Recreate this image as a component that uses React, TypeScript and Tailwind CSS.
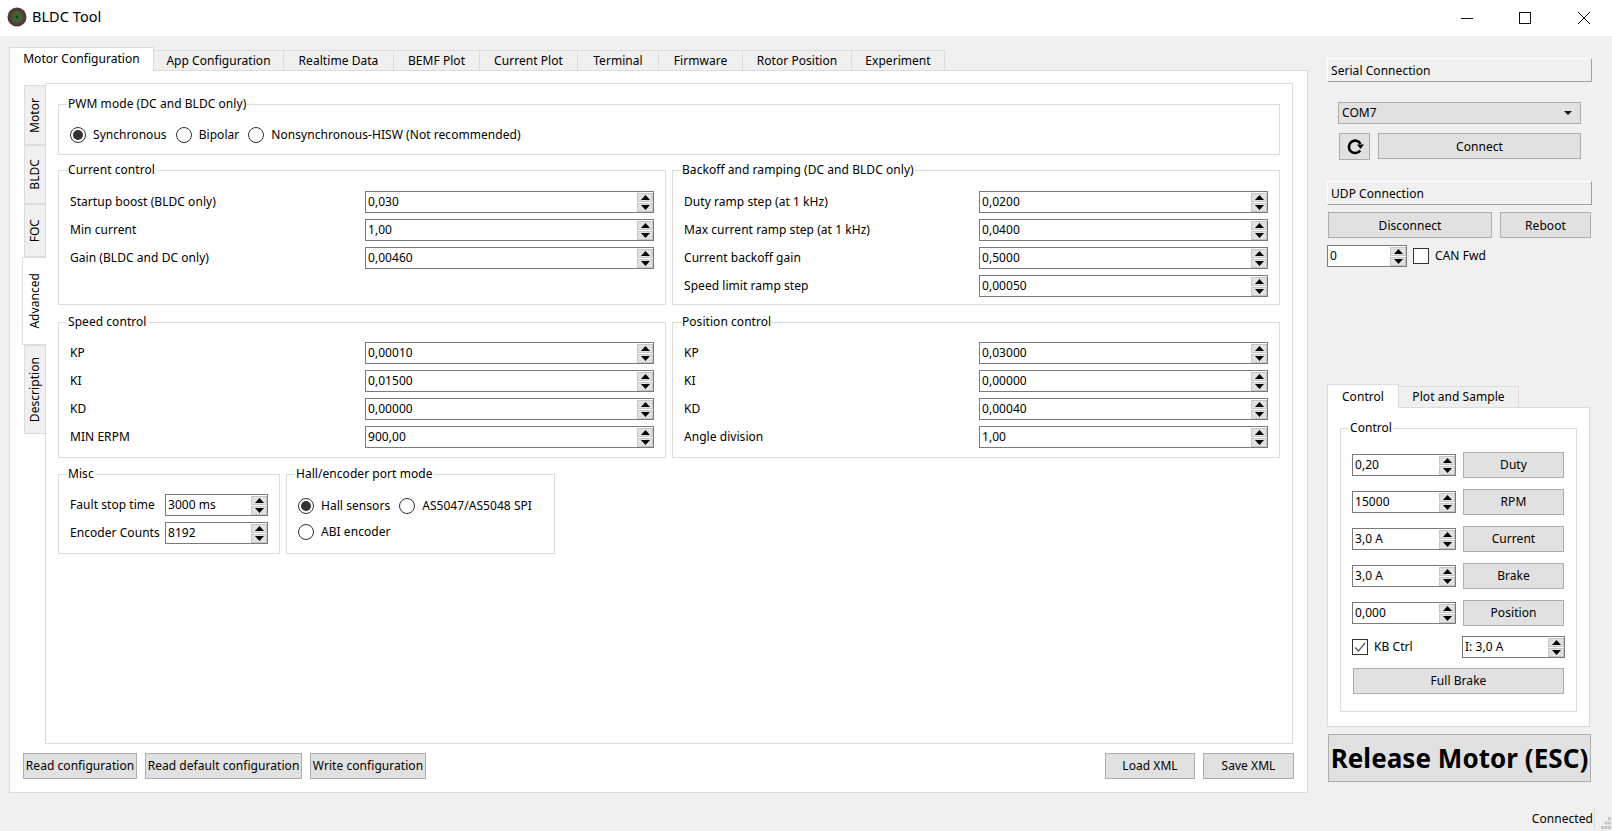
import { ReactNode } from "react";

const font = "font-['Noto_Sans',Tahoma,sans-serif]";

function Arrows() {
  return (
    <div className="flex flex-col w-[16px] h-[19px] shrink-0 gap-px">
      <div className="flex-1 bg-[#e1e1e1] border border-[#c6c6c6] flex items-center justify-center">
        <svg width="9" height="5" viewBox="0 0 9 5">
          <path d="M4.5 0L9 5H0z" fill="#000" />
        </svg>
      </div>
      <div className="flex-1 bg-[#e1e1e1] border border-[#c6c6c6] flex items-center justify-center">
        <svg width="9" height="5" viewBox="0 0 9 5">
          <path d="M0 0h9L4.5 5z" fill="#000" />
        </svg>
      </div>
    </div>
  );
}

function Spin({ value, className = "" }: { value: string; className?: string }) {
  return (
    <div
      className={`h-[22px] bg-white border border-[#7a7a7a] flex items-center pl-[2px] ${className}`}
    >
      <span className="flex-1 leading-none">{value}</span>
      <Arrows />
    </div>
  );
}

function Button({
  children,
  className = "",
}: {
  children: ReactNode;
  className?: string;
}) {
  return (
    <div
      className={`h-[26px] bg-[#e1e1e1] border border-[#adadad] flex items-center justify-center whitespace-nowrap ${className}`}
    >
      {children}
    </div>
  );
}

function Radio({ label, checked = false }: { label: string; checked?: boolean }) {
  return (
    <div className="flex items-center gap-[7px] whitespace-nowrap">
      <div className="w-[16px] h-[16px] rounded-full border border-[#333] flex items-center justify-center bg-white">
        {checked && <div className="w-[10px] h-[10px] rounded-full bg-[#333]" />}
      </div>
      {label}
    </div>
  );
}

function Check({ label, checked = false }: { label: string; checked?: boolean }) {
  return (
    <div className="flex items-center gap-[6px] whitespace-nowrap">
      <div className="w-[16px] h-[16px] border border-[#333] bg-white flex items-center justify-center">
        {checked && (
          <svg width="12" height="12" viewBox="0 0 12 12" fill="none">
            <path d="M1 6.5l3.5 3.5L11 2" stroke="#555" strokeWidth="1.2" />
          </svg>
        )}
      </div>
      {label}
    </div>
  );
}

function Group({
  title,
  className = "",
  children,
}: {
  title: string;
  className?: string;
  children: ReactNode;
}) {
  return (
    <div className={`relative border border-[#dcdcdc] ${className}`}>
      <span className="absolute left-[8px] top-[-10px] bg-white px-px leading-[18px] whitespace-nowrap">
        {title}
      </span>
      {children}
    </div>
  );
}

function ParamGroup({
  title,
  className = "",
  rows,
  topClass = "pt-[19px]",
}: {
  title: string;
  className?: string;
  rows: [string, string][];
  topClass?: string;
}) {
  return (
    <Group title={title} className={className}>
      <div className={`flex flex-col gap-[6px] pl-[11px] pr-[11px] ${topClass}`}>
        {rows.map(([label, value]) => (
          <div key={label} className="flex items-center justify-between">
            <span>{label}</span>
            <Spin value={value} className="w-[289px]" />
          </div>
        ))}
      </div>
    </Group>
  );
}

const mainTabs = [
  ["App Configuration", "w-[130px]"],
  ["Realtime Data", "w-[110px]"],
  ["BEMF Plot", "w-[86px]"],
  ["Current Plot", "w-[98px]"],
  ["Terminal", "w-[81px]"],
  ["Firmware", "w-[84px]"],
  ["Rotor Position", "w-[109px]"],
  ["Experiment", "w-[93px]"],
];

const sideTabs = [
  ["Motor", "h-[60px]"],
  ["BLDC", "h-[59px]"],
  ["FOC", "h-[53px]"],
];

const controls = [
  ["0,20", "Duty"],
  ["15000", "RPM"],
  ["3,0 A", "Current"],
  ["3,0 A", "Brake"],
  ["0,000", "Position"],
];

export default function App() {
  return (
    <div
      className={`${font} w-[1612px] h-[831px] overflow-hidden bg-[#f0f0f0] text-[12px] tracking-[0.05px] text-black flex flex-col`}
    >
      {/* window title */}
      <div className="h-[36px] bg-white flex items-center shrink-0">
        <svg width="20" height="20" viewBox="0 0 20 20" className="ml-[7px] -mt-[2px]">
          <circle cx="10" cy="10" r="9.5" fill="#4d3a34" />
          <circle cx="10" cy="10" r="6.5" fill="#5f4a3a" />
          <circle cx="10" cy="10" r="4.5" fill="#2f6b35" />
          <circle cx="10" cy="10" r="1.5" fill="#1d3d20" />
        </svg>
        <span className="ml-[5px] text-[14.5px] -mt-[2px]">BLDC Tool</span>
        <div className="ml-auto flex items-center mr-[22px] -mt-[1px]">
          <svg width="12" height="12" viewBox="0 0 12 12" className="mr-[46px]">
            <path d="M0 6.5h12" stroke="#111" />
          </svg>
          <svg width="12" height="12" viewBox="0 0 12 12" className="mr-[47px]">
            <rect x="0.5" y="0.5" width="11" height="11" fill="none" stroke="#111" />
          </svg>
          <svg width="12" height="12" viewBox="0 0 12 12">
            <path d="M0 0l12 12M12 0L0 12" stroke="#111" />
          </svg>
        </div>
      </div>

      <div className="flex flex-1 min-h-0">
        {/* left side */}
        <div className="w-[1308px] pl-[9px] pt-[11px] shrink-0">
          <div className="flex items-end h-[23px]">
            <div className="w-[145px] h-[24px] -mb-px pb-[2px] bg-white border border-b-0 border-[#dcdcdc] z-10 flex items-center justify-center">
              Motor Configuration
            </div>
            {mainTabs.map(([label, width]) => (
              <div
                key={label}
                className={`${width} h-[20px] bg-[#f0f0f0] border border-l-0 border-b-0 border-[#dcdcdc] flex items-center justify-center`}
              >
                {label}
              </div>
            ))}
          </div>
          <div className="h-[723px] bg-white border border-[#dcdcdc] pt-[12px] pl-[14px] pr-[14px]">
            <div className="flex h-[661px]">
              <div className="w-[21px] pt-[2px] flex flex-col shrink-0">
                {sideTabs.map(([label, height]) => (
                  <div
                    key={label}
                    className={`${height} bg-[#f0f0f0] border border-r-0 border-[#dcdcdc] flex items-center justify-center`}
                  >
                    <span className="[writing-mode:vertical-rl] rotate-180">{label}</span>
                  </div>
                ))}
                <div className="h-[88px] w-[24px] -ml-[2px] z-10 bg-white border border-r-0 border-[#dcdcdc] flex items-center justify-center">
                  <span className="[writing-mode:vertical-rl] rotate-180">Advanced</span>
                </div>
                <div className="h-[89px] bg-[#f0f0f0] border border-r-0 border-[#dcdcdc] flex items-center justify-center">
                  <span className="[writing-mode:vertical-rl] rotate-180">Description</span>
                </div>
              </div>
              <div className="flex-1 border border-[#dcdcdc] pl-[12px] pt-[20px]">
                <div className="w-[1222px] flex flex-col">
                  <Group title="PWM mode (DC and BLDC only)" className="h-[51px]">
                    <div className="flex items-center gap-[9px] pl-[11px] pt-[21px]">
                      <Radio label="Synchronous" checked />
                      <Radio label="Bipolar" />
                      <Radio label="Nonsynchronous-HISW (Not recommended)" />
                    </div>
                  </Group>

                  <div className="grid grid-cols-2 gap-x-[6px] mt-[15px]">
                    <ParamGroup
                      title="Current control"
                      className="h-[135px]"
                      topClass="pt-[20px]"
                      rows={[
                        ["Startup boost (BLDC only)", "0,030"],
                        ["Min current", "1,00"],
                        ["Gain (BLDC and DC only)", "0,00460"],
                      ]}
                    />
                    <ParamGroup
                      title="Backoff and ramping (DC and BLDC only)"
                      className="h-[135px]"
                      topClass="pt-[20px]"
                      rows={[
                        ["Duty ramp step (at 1 kHz)", "0,0200"],
                        ["Max current ramp step (at 1 kHz)", "0,0400"],
                        ["Current backoff gain", "0,5000"],
                        ["Speed limit ramp step", "0,00050"],
                      ]}
                    />
                  </div>

                  <div className="grid grid-cols-2 gap-x-[6px] mt-[17px]">
                    <ParamGroup
                      title="Speed control"
                      className="h-[136px]"
                      rows={[
                        ["KP", "0,00010"],
                        ["KI", "0,01500"],
                        ["KD", "0,00000"],
                        ["MIN ERPM", "900,00"],
                      ]}
                    />
                    <ParamGroup
                      title="Position control"
                      className="h-[136px]"
                      rows={[
                        ["KP", "0,03000"],
                        ["KI", "0,00000"],
                        ["KD", "0,00040"],
                        ["Angle division", "1,00"],
                      ]}
                    />
                  </div>

                  <div className="flex gap-x-[6px] mt-[16px]">
                    <Group title="Misc" className="w-[222px] h-[80px]">
                      <div className="flex flex-col gap-[6px] pt-[19px] pl-[11px] pr-[11px]">
                        <div className="flex items-center justify-between">
                          <span>Fault stop time</span>
                          <Spin value="3000 ms" className="w-[103px]" />
                        </div>
                        <div className="flex items-center justify-between">
                          <span>Encoder Counts</span>
                          <Spin value="8192" className="w-[103px]" />
                        </div>
                      </div>
                    </Group>
                    <Group title="Hall/encoder port mode" className="w-[269px] h-[80px]">
                      <div className="pl-[11px] pt-[22px] flex flex-col gap-[8px]">
                        <div className="flex gap-[9px]">
                          <Radio label="Hall sensors" checked />
                          <Radio label="AS5047/AS5048 SPI" />
                        </div>
                        <Radio label="ABI encoder" />
                      </div>
                    </Group>
                  </div>
                </div>
              </div>
            </div>
            <div className="flex mt-[9px] gap-[8px]">
              <Button className="w-[114px] ml-[-1px]">Read configuration</Button>
              <Button className="w-[157px]">Read default configuration</Button>
              <Button className="w-[116px]">Write configuration</Button>
              <Button className="w-[90px] ml-auto">Load XML</Button>
              <Button className="w-[91px] -mr-px">Save XML</Button>
            </div>
          </div>
        </div>

        {/* right side */}
        <div className="flex-1 pl-[19px] pr-[20px] pt-[22px] flex flex-col">
          <div className="h-[24px] bg-[#f0f0f0] border border-white border-r-[#a0a0a0] border-b-[#a0a0a0] flex items-center pl-[3px] pt-px">
            Serial Connection
          </div>
          <div className="pl-[11px] pr-[11px] mt-[20px]">
            <div className="h-[22px] bg-[#e1e1e1] border border-[#adadad] flex items-center pl-[3px] pr-[8px]">
              <span className="flex-1">COM7</span>
              <svg width="8" height="4" viewBox="0 0 8 4">
                <path d="M0 0h8L4 4z" fill="#111" />
              </svg>
            </div>
            <div className="flex mt-[9px] gap-[8px] pl-px">
              <div className="w-[31px] h-[27px] bg-[#e1e1e1] border border-[#adadad] flex items-center justify-center">
                <svg width="20" height="20" viewBox="0 0 20 20" fill="none">
                  <path
                    d="M15.2 13.4a6.2 6.2 0 1 1 .3-6.6"
                    stroke="#000"
                    strokeWidth="2.6"
                  />
                  <path d="M12 7.5h7l-3.5 4.5z" fill="#000" />
                </svg>
              </div>
              <Button className="flex-1 pt-px">Connect</Button>
            </div>
          </div>
          <div className="h-[24px] mt-[21px] bg-[#f0f0f0] border border-white border-r-[#a0a0a0] border-b-[#a0a0a0] flex items-center pl-[3px] pt-px">
            UDP Connection
          </div>
          <div className="flex gap-[8px] mt-[7px] px-px">
            <Button className="w-[164px] pt-px">Disconnect</Button>
            <Button className="w-[91px] pt-px">Reboot</Button>
          </div>
          <div className="flex items-center mt-[7px]">
            <Spin value="0" className="w-[80px]" />
            <div className="ml-[6px]">
              <Check label="CAN Fwd" />
            </div>
          </div>

          <div className="mt-[117px] flex items-end h-[23px]">
            <div className="w-[72px] h-[24px] -mb-px z-10 bg-white border border-b-0 border-[#dcdcdc] flex items-center justify-center">
              Control
            </div>
            <div className="w-[120px] h-[21px] border border-l-0 border-b-0 border-[#dcdcdc] flex items-center justify-center">
              Plot and Sample
            </div>
          </div>
          <div className="w-[263px] h-[320px] bg-white border border-[#dcdcdc] pt-[20px] pl-[12px]">
            <Group title="Control" className="w-[237px] h-[284px]">
              <div className="pl-[11px] pt-[23px] pr-[12px] flex flex-col gap-[11px]">
                {controls.map(([value, label]) => (
                  <div key={label} className="flex items-center justify-between">
                    <Spin value={value} className="w-[104px]" />
                    <Button className="w-[101px]">{label}</Button>
                  </div>
                ))}
              </div>
              <div className="pl-[11px] pr-[12px] mt-[10px] flex items-center justify-between">
                <Check label="KB Ctrl" checked />
                <Spin value="I: 3,0 A" className="w-[103px] -mr-px" />
              </div>
              <div className="pl-[12px] pr-[12px] mt-[10px]">
                <Button>Full Brake</Button>
              </div>
            </Group>
          </div>
          <div className="mt-[7px] mx-px w-[263px] h-[48px] bg-[#e1e1e1] border border-[#adadad] flex items-center justify-center text-[26px] font-bold text-black whitespace-nowrap">
            Release Motor (ESC)
          </div>
          <div className="flex items-end justify-end mt-[25px] h-[23px] -mr-[20px] pr-px">
            <span className="h-full border-r border-[#d8d8d8] pr-px flex items-center">Connected</span>
            <svg width="10" height="12" viewBox="0 0 10 12" className="ml-[6px] mb-px" fill="#c4c4c4">
              <rect x="7" y="0" width="3" height="3" />
              <rect x="3.5" y="4.5" width="3" height="3" />
              <rect x="7" y="4.5" width="3" height="3" />
              <rect x="0" y="9" width="3" height="3" />
              <rect x="3.5" y="9" width="3" height="3" />
              <rect x="7" y="9" width="3" height="3" />
            </svg>
          </div>
        </div>
      </div>
    </div>
  );
}
